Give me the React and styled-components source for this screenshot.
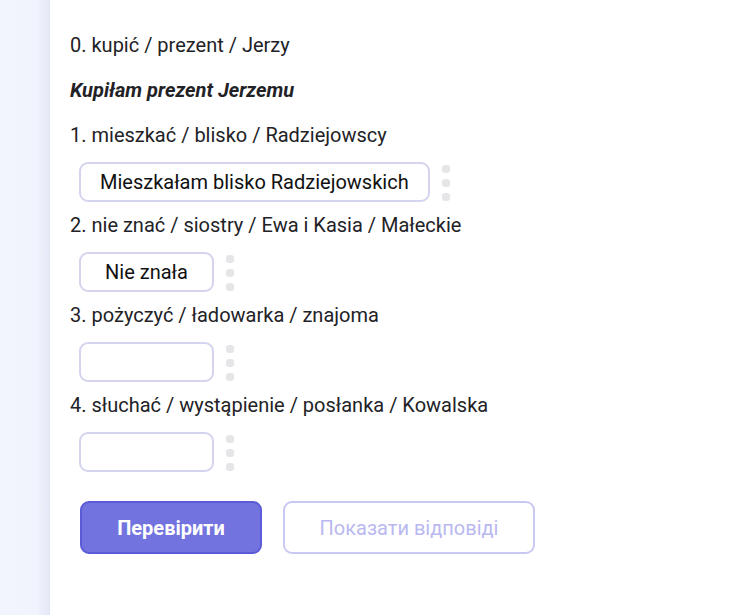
import React from 'react';
import styled, { createGlobalStyle } from 'styled-components';

const GlobalStyle = createGlobalStyle`
  html, body {
    margin: 0;
    padding: 0;
    background: #ffffff;
  }
  body {
    font-family: Roboto, 'Liberation Sans', sans-serif;
  }
`;

const Page = styled.div`
  display: flex;
  min-height: 615px;
  width: 747px;
`;

const Sidebar = styled.div`
  width: 50px;
  flex-shrink: 0;
  background: linear-gradient(to right, #f2f4fe 0, #f1f3fd 36px, #e6e9f8 48px, #e2e5f5 50px);
`;

const Content = styled.div`
  flex: 1;
  padding: 32px 0 0 20px;
`;

const Prompt = styled.div`
  font-size: 20px;
  line-height: 26px;
  color: #222226;
  height: 26px;
`;

const Example = styled.div`
  font-size: 20px;
  line-height: 26px;
  font-weight: 700;
  font-style: italic;
  color: #222226;
  margin: 19px 0;
`;

const Task = styled.div`
  margin-bottom: 10px;
`;

const AnswerRow = styled.div`
  display: flex;
  align-items: center;
  gap: 12px;
  margin: 14px 0 0 9px;
  height: 40px;
`;

const AnswerBox = styled.div`
  box-sizing: border-box;
  height: 40px;
  min-width: 135px;
  padding: 0 19px;
  border: 2px solid #d4d4ef;
  border-radius: 9px;
  display: flex;
  align-items: center;
  justify-content: center;
  font-size: 20px;
  color: #111;
  background: #fff;
`;

const Handle = styled.div`
  display: flex;
  flex-direction: column;
  gap: 6px;
  padding-top: 1px;

  span {
    width: 8px;
    height: 8px;
    border-radius: 3px;
    background: #e6e6e8;
  }
`;

const Buttons = styled.div`
  display: flex;
  gap: 21px;
  margin: 29px 0 0 10px;
`;

const Button = styled.button`
  box-sizing: border-box;
  height: 53px;
  border-radius: 9px;
  font-family: Roboto, 'Liberation Sans', sans-serif;
  font-size: 20px;
  padding: 0;
  width: ${(p) => p.$width}px;
  background: ${(p) => (p.$primary ? '#7373df' : '#ffffff')};
  border: 2px solid ${(p) => (p.$primary ? '#5b5bd8' : '#c9c8f3')};
  color: ${(p) => (p.$primary ? '#ffffff' : '#b9b8f0')};
  font-weight: ${(p) => (p.$primary ? 700 : 400)};
`;

const tasks = [
  { q: '1. mieszkać / blisko / Radziejowscy', a: 'Mieszkałam blisko Radziejowskich' },
  { q: '2. nie znać / siostry / Ewa i Kasia / Małeckie', a: 'Nie znała' },
  { q: '3. pożyczyć / ładowarka / znajoma', a: '' },
  { q: '4. słuchać / wystąpienie / posłanka / Kowalska', a: '' },
];

const App = () => {
  return (
    <Page>
      <GlobalStyle />
      <Sidebar />
      <Content>
        <Prompt>0. kupić / prezent / Jerzy</Prompt>
        <Example>Kupiłam prezent Jerzemu</Example>
        {tasks.map((t) => (
          <Task key={t.q}>
            <Prompt>{t.q}</Prompt>
            <AnswerRow>
              <AnswerBox>{t.a}</AnswerBox>
              <Handle>
                <span />
                <span />
                <span />
              </Handle>
            </AnswerRow>
          </Task>
        ))}
        <Buttons>
          <Button $primary $width={182}>Перевірити</Button>
          <Button $width={252}>Показати відповіді</Button>
        </Buttons>
      </Content>
    </Page>
  );
};

export default App;
